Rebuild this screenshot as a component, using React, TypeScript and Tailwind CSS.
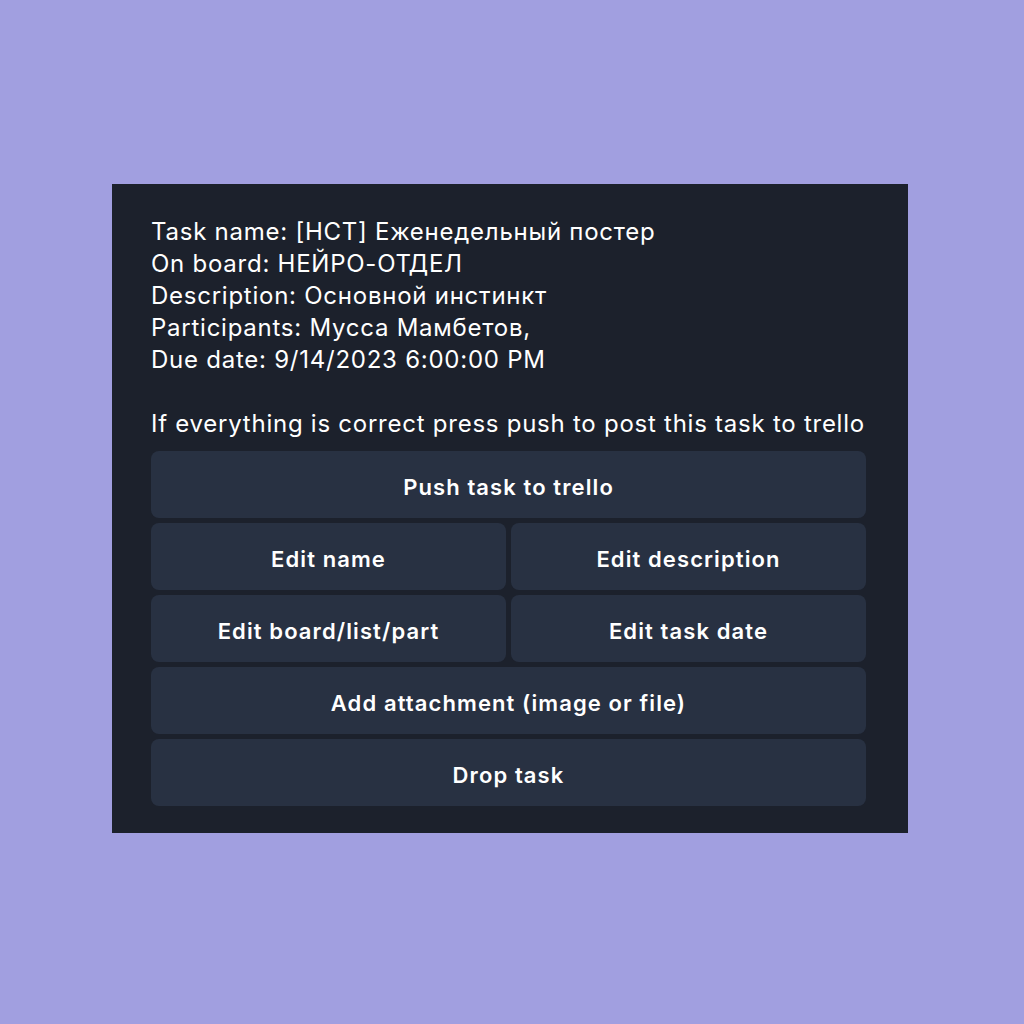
import * as React from "react";

function Btn({ label }: { label: string }) {
  return (
    <div className="h-[67px] pt-[5px] rounded-[8px] bg-[#283142] flex items-center justify-center text-[22px] tracking-[1.1px] font-semibold text-white">
      {label}
    </div>
  );
}

export default function App() {
  return (
    <div
      className="min-h-screen w-full bg-[#a19fe0] pt-[184px] pl-[112px]"
      style={{ fontFamily: "Inter, 'Noto Sans', sans-serif" }}
    >
      <div className="w-[796px] bg-[#1c212c] pl-[39px] pr-[42px] pt-[32px] pb-[27px]">
        {/* Task summary */}
        <div className="text-[24px] leading-[32px] tracking-[0.75px] text-white">
          <div>Task name: [НСТ] Еженедельный постер</div>
          <div>On board: НЕЙРО-ОТДЕЛ</div>
          <div>Description: Основной инстинкт</div>
          <div>Participants: Мусса Мамбетов,</div>
          <div>Due date: 9/14/2023 6:00:00 PM</div>
          <div>&nbsp;</div>
          <div className="whitespace-nowrap">If everything is correct press push to post this task to trello</div>
        </div>

        {/* Inline keyboard */}
        <div className="mt-[11px] flex flex-col gap-[5px]">
          <Btn label="Push task to trello" />
          <div className="grid grid-cols-2 gap-[5px]">
            <Btn label="Edit name" />
            <Btn label="Edit description" />
          </div>
          <div className="grid grid-cols-2 gap-[5px]">
            <Btn label="Edit board/list/part" />
            <Btn label="Edit task date" />
          </div>
          <Btn label="Add attachment (image or file)" />
          <Btn label="Drop task" />
        </div>
      </div>
    </div>
  );
}
